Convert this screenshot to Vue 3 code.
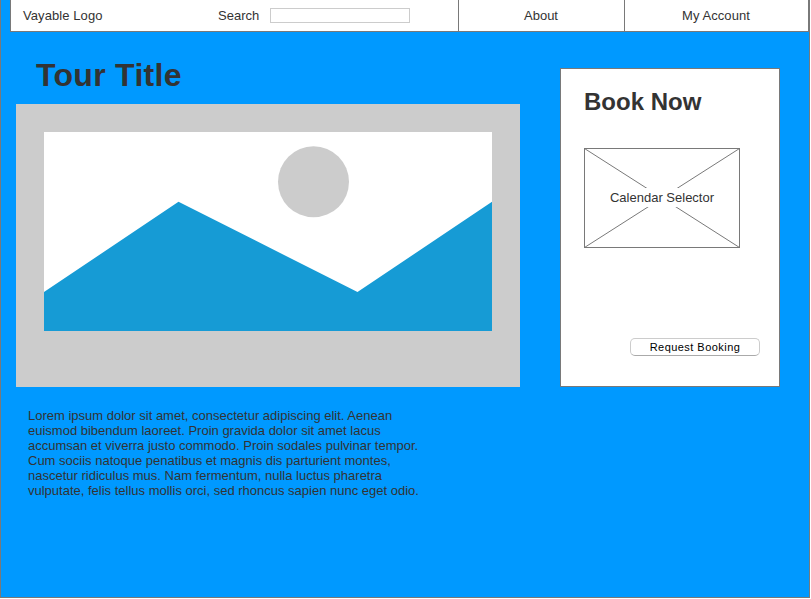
<script setup>
const lines = [
  'Lorem ipsum dolor sit amet, consectetur adipiscing elit. Aenean',
  'euismod bibendum laoreet. Proin gravida dolor sit amet lacus',
  'accumsan et viverra justo commodo. Proin sodales pulvinar tempor.',
  'Cum sociis natoque penatibus et magnis dis parturient montes,',
  'nascetur ridiculus mus. Nam fermentum, nulla luctus pharetra',
  'vulputate, felis tellus mollis orci, sed rhoncus sapien nunc eget odio.',
]
</script>

<template>
  <div class="page">
    <div class="frame">
      <header class="bar">
        <div class="main-cell">
          <span class="logo">Vayable Logo</span>
          <label class="search" for="q">Search</label>
          <input id="q" class="field" type="text" />
        </div>
        <a class="cell about">About</a>
        <a class="cell account">My Account</a>
      </header>
      <main class="content">
        <section class="tour">
          <h1>Tour Title</h1>
          <div class="photo">
            <svg width="448" height="199" viewBox="0 0 448 199">
              <rect width="448" height="199" fill="#fff" />
              <circle cx="269.5" cy="49.8" r="35.5" fill="#ccc" />
              <path d="M0 160L134.5 69.8L313.5 160L448 69.8V199H0Z" fill="#169bd5" />
            </svg>
          </div>
          <p class="desc">
            <span v-for="line in lines" :key="line" class="line">{{ line }}</span>
          </p>
        </section>
        <aside class="book">
          <h2>Book Now</h2>
          <div class="calendar">
            <svg class="cross" width="156" height="100" viewBox="0 0 156 100">
              <path d="M.5 .5L155.5 99.5M155.5 .5L.5 99.5" stroke="#797979" fill="none" />
            </svg>
            <span class="label">Calendar Selector</span>
          </div>
          <button class="request">Request Booking</button>
        </aside>
      </main>
    </div>
  </div>
</template>

<style>
body {
  background: #fff;
}
</style>

<style scoped>
* {
  box-sizing: border-box;
}
.page {
  width: 811px;
  height: 599px;
  padding-right: 1px;
  overflow: hidden;
  font-family: "Liberation Sans", Arial, sans-serif;
  font-size: 13px;
  line-height: 15px;
  color: #333;
}
.frame {
  height: 598px;
  background: #0099ff;
  border: solid #797979;
  border-width: 0 1px 1px;
}
.bar {
  display: flex;
  width: 799px;
  height: 32px;
  margin-left: 9px;
  background: #fff;
  border: solid #797979;
  border-width: 0 1px 1px;
}
.main-cell {
  display: flex;
  width: 448px;
  padding: 8px 0 0 12px;
  border-right: 1px solid #797979;
}
.logo {
  width: 195px;
  letter-spacing: 0.08px;
}
.search {
  width: 52px;
}
.field {
  width: 140px;
  height: 15px;
  padding: 0 2px;
  border: 1px solid #ccc;
  background: #fff;
  outline: none;
}
.cell {
  padding: 8px 1px 0 0;
  text-align: center;
}
.about {
  width: 166px;
  border-right: 1px solid #797979;
}
.account {
  flex: 1;
  letter-spacing: 0.08px;
}
.content {
  display: flex;
  align-items: flex-start;
}
.tour {
  width: 504px;
  margin: 25px 40px 0 15px;
}
h1 {
  margin: 0;
  height: 47px;
  padding-left: 20px;
  font-size: 32px;
  line-height: 37px;
  letter-spacing: 0.3px;
}
.photo {
  height: 283px;
  padding: 28px;
  background: #ccc;
}
.photo svg {
  display: block;
}
.desc {
  margin: 21px 0 0 12px;
}
.line {
  display: block;
  white-space: nowrap;
}
.book {
  width: 220px;
  height: 319px;
  margin-top: 36px;
  padding: 19px 0 0 23px;
  background: #fff;
  border: 1px solid #797979;
}
h2 {
  margin: 0 0 32px;
  font-size: 24px;
  line-height: 28px;
}
.calendar {
  position: relative;
  display: flex;
  width: 156px;
  height: 100px;
  padding-bottom: 2px;
  justify-content: center;
  align-items: center;
  border: 1px solid #797979;
}
.cross {
  position: absolute;
  top: -1px;
  left: -1px;
}
.label {
  position: relative;
  padding: 2px;
  background: #fff;
}
.request {
  display: block;
  width: 130px;
  height: 18px;
  margin: 90px 0 0 46px;
  padding: 0;
  background: #fff;
  border: 1px solid #ccc;
  border-bottom-color: #aaa;
  border-radius: 5px;
  font: 11px/15px "Liberation Sans", Arial, sans-serif;
  letter-spacing: 0.46px;
  color: #000;
}
</style>
